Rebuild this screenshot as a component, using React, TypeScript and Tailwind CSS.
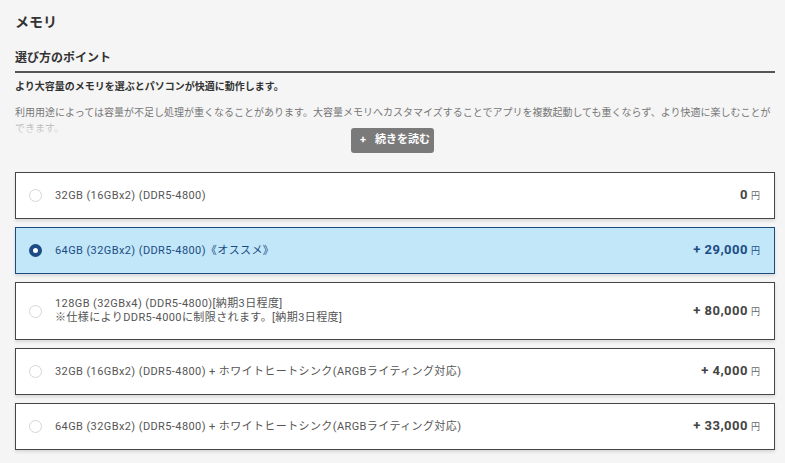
import React from 'react';

type Option = {
  id: string;
  lines: string[];
  price: string;
};

const options: Option[] = [
  { id: 'm32', lines: ['32GB (16GBx2) (DDR5-4800)'], price: '0' },
  { id: 'm64', lines: ['64GB (32GBx2) (DDR5-4800)《オススメ》'], price: '+ 29,000' },
  {
    id: 'm128',
    lines: ['128GB (32GBx4) (DDR5-4800)[納期3日程度]', '※仕様によりDDR5-4000に制限されます。[納期3日程度]'],
    price: '+ 80,000',
  },
  { id: 'm32w', lines: ['32GB (16GBx2) (DDR5-4800) + ホワイトヒートシンク(ARGBライティング対応)'], price: '+ 4,000' },
  { id: 'm64w', lines: ['64GB (32GBx2) (DDR5-4800) + ホワイトヒートシンク(ARGBライティング対応)'], price: '+ 33,000' },
];

const Radio: React.FC<{ checked: boolean }> = ({ checked }) =>
  checked ? (
    <span className="block w-[13px] h-[13px] rounded-full border-[4px] border-[#1d4b85] bg-white shrink-0" />
  ) : (
    <span className="block w-[13px] h-[13px] rounded-full border border-[#d6d6d6] bg-white shrink-0" />
  );

const OptionCard: React.FC<{ option: Option; selected: boolean }> = ({ option, selected }) => (
  <div
    className={
      selected
        ? 'flex items-center min-h-[46px] pl-[13px] pr-[14px] py-[14px] border border-[#1f4a7d] bg-[#c1e7f8] shadow-[0_2px_3px_rgba(0,0,0,0.12)]'
        : 'flex items-center min-h-[47px] pl-[13px] pr-[14px] py-[14px] border border-[#454545] bg-white shadow-[0_2px_3px_rgba(0,0,0,0.12)]'
    }
  >
    <Radio checked={selected} />
    <div
      className={
        selected
          ? 'flex-1 ml-[13px] text-[11px] leading-[14px] tracking-[0.4px] text-[#1d4b85]'
          : 'flex-1 ml-[13px] text-[11px] leading-[14px] tracking-[0.4px] text-[#555]'
      }
    >
      {option.lines.map((l) => (
        <div key={l}>{l}</div>
      ))}
    </div>
    <div className="flex items-baseline leading-[15px]">
      <span
        className={
          selected
            ? 'text-[13px] leading-[15px] font-bold tracking-[0.5px] text-[#1d4b85]'
            : 'text-[13px] leading-[15px] font-bold tracking-[0.5px] text-[#444]'
        }
      >
        {option.price}
      </span>
      <span
        className={
          selected
            ? 'ml-[3px] text-[9px] leading-[15px] text-[#1d4b85]'
            : 'ml-[3px] text-[9px] leading-[15px] text-[#666]'
        }
      >
        円
      </span>
    </div>
  </div>
);

export default function App() {
  return (
    <div
      className="w-[785px] h-[463px] overflow-hidden bg-[#f5f5f5] pl-[15px] pr-[10px] pt-[13px] box-border"
      style={{ fontFamily: "Roboto, 'Noto Sans CJK JP', sans-serif" }}
    >
      <h1 className="text-[14px] leading-[18px] font-bold text-[#333]">メモリ</h1>

      <h2 className="mt-[18px] pb-[4px] text-[12px] leading-[18px] font-bold text-[#333] border-b-2 border-[#555]">
        選び方のポイント
      </h2>

      <p className="mt-[7px] text-[10px] leading-[14px] font-bold text-[#333]">
        より大容量のメモリを選ぶとパソコンが快適に動作します。
      </p>

      <div className="relative mt-[11px] h-[32px] overflow-hidden text-[10px] leading-[16px] text-[#777]">
        利用用途によっては容量が不足し処理が重くなることがあります。大容量メモリへカスタマイズすることでアプリを複数起動しても重くならず、より快適に楽しむことができます。
        <div className="absolute left-0 right-0 bottom-0 h-[18px] bg-gradient-to-b from-[#f5f5f5]/30 to-[#f5f5f5]/90" />
      </div>

      <div className="relative -mt-[9px] flex justify-center pr-[5px]">
        <button className="flex items-center h-[25px] w-[83px] pl-[9px] rounded-[3px] bg-[#7a7a7a] text-white text-[11px] font-bold">
          <span>+</span>
          <span className="ml-[9px]">続きを読む</span>
        </button>
      </div>

      <div className="mt-[19px] flex flex-col gap-[8px]">
        {options.map((o) => (
          <OptionCard key={o.id} option={o} selected={o.id === 'm64'} />
        ))}
      </div>
    </div>
  );
}
